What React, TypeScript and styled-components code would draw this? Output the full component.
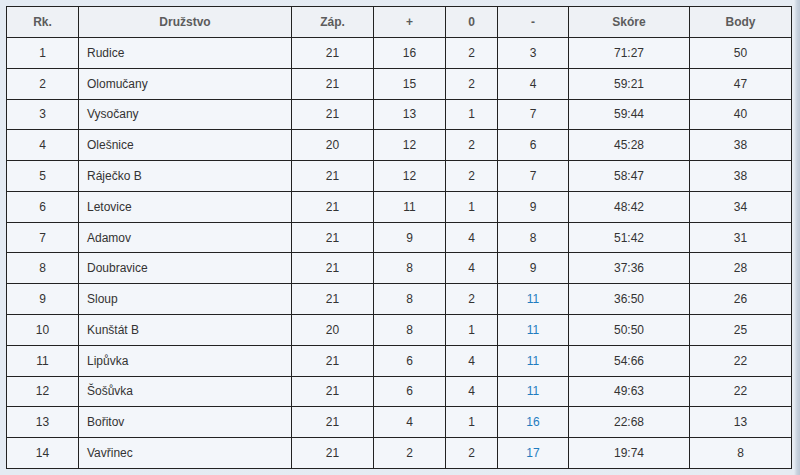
import React from "react";
import styled, { createGlobalStyle } from "styled-components";

const Global = createGlobalStyle`
  html, body {
    margin: 0;
    padding: 0;
    width: 800px;
    height: 475px;
    overflow: hidden;
    background: linear-gradient(to right, #e4ebf3 0px, #e6ecf3 794px, #c8d2de 797px, #bcc7d4 800px);
    font-family: "Liberation Sans", Arial, sans-serif;
  }
`;

const Page = styled.div`
  padding: 6px 0 0 6px;
`;

const Table = styled.table`
  border-collapse: collapse;
  width: 785px;
  height: 463px;
  table-layout: fixed;
  background: #f3f6fa;
  border: 1.5px solid #111;
  font-size: 12px;
  color: #333;
`;

const HeadRow = styled.tr`
  height: 31px;
`;

const Th = styled.th`
  font-weight: bold;
  color: #5c5c5c;
  background: #eef1f5;
  border: 1px solid #222;
  text-align: center;
  padding: 0;
`;

const Td = styled.td<{ $left?: boolean; $blue?: boolean }>`
  border: 1px solid #222;
  text-align: ${(p) => (p.$left ? "left" : "center")};
  padding: ${(p) => (p.$left ? "0 0 0 8px" : "0")};
  color: ${(p) => (p.$blue ? "#1f7cc0" : "#333")};
  height: 28px;
`;

const cols = [72, 213, 82, 72, 52, 71, 121, 102];
const heads = ["Rk.", "Družstvo", "Záp.", "+", "0", "-", "Skóre", "Body"];

const rows: [number, string, number, number, number, number, string, number][] = [
  [1, "Rudice", 21, 16, 2, 3, "71:27", 50],
  [2, "Olomučany", 21, 15, 2, 4, "59:21", 47],
  [3, "Vysočany", 21, 13, 1, 7, "59:44", 40],
  [4, "Olešnice", 20, 12, 2, 6, "45:28", 38],
  [5, "Ráječko B", 21, 12, 2, 7, "58:47", 38],
  [6, "Letovice", 21, 11, 1, 9, "48:42", 34],
  [7, "Adamov", 21, 9, 4, 8, "51:42", 31],
  [8, "Doubravice", 21, 8, 4, 9, "37:36", 28],
  [9, "Sloup", 21, 8, 2, 11, "36:50", 26],
  [10, "Kunštát B", 20, 8, 1, 11, "50:50", 25],
  [11, "Lipůvka", 21, 6, 4, 11, "54:66", 22],
  [12, "Šošůvka", 21, 6, 4, 11, "49:63", 22],
  [13, "Bořitov", 21, 4, 1, 16, "22:68", 13],
  [14, "Vavřinec", 21, 2, 2, 17, "19:74", 8],
];

export default function App() {
  return (
    <>
      <Global />
      <Page>
        <Table>
          <colgroup>
            {cols.map((w, i) => (
              <col key={i} style={{ width: w }} />
            ))}
          </colgroup>
          <thead>
            <HeadRow>
              {heads.map((h) => (
                <Th key={h}>{h}</Th>
              ))}
            </HeadRow>
          </thead>
          <tbody>
            {rows.map((r) => (
              <tr key={r[0]}>
                <Td>{r[0]}</Td>
                <Td $left>{r[1]}</Td>
                <Td>{r[2]}</Td>
                <Td>{r[3]}</Td>
                <Td>{r[4]}</Td>
                <Td $blue={r[5] >= 10}>{r[5]}</Td>
                <Td>{r[6]}</Td>
                <Td>{r[7]}</Td>
              </tr>
            ))}
          </tbody>
        </Table>
      </Page>
    </>
  );
}
